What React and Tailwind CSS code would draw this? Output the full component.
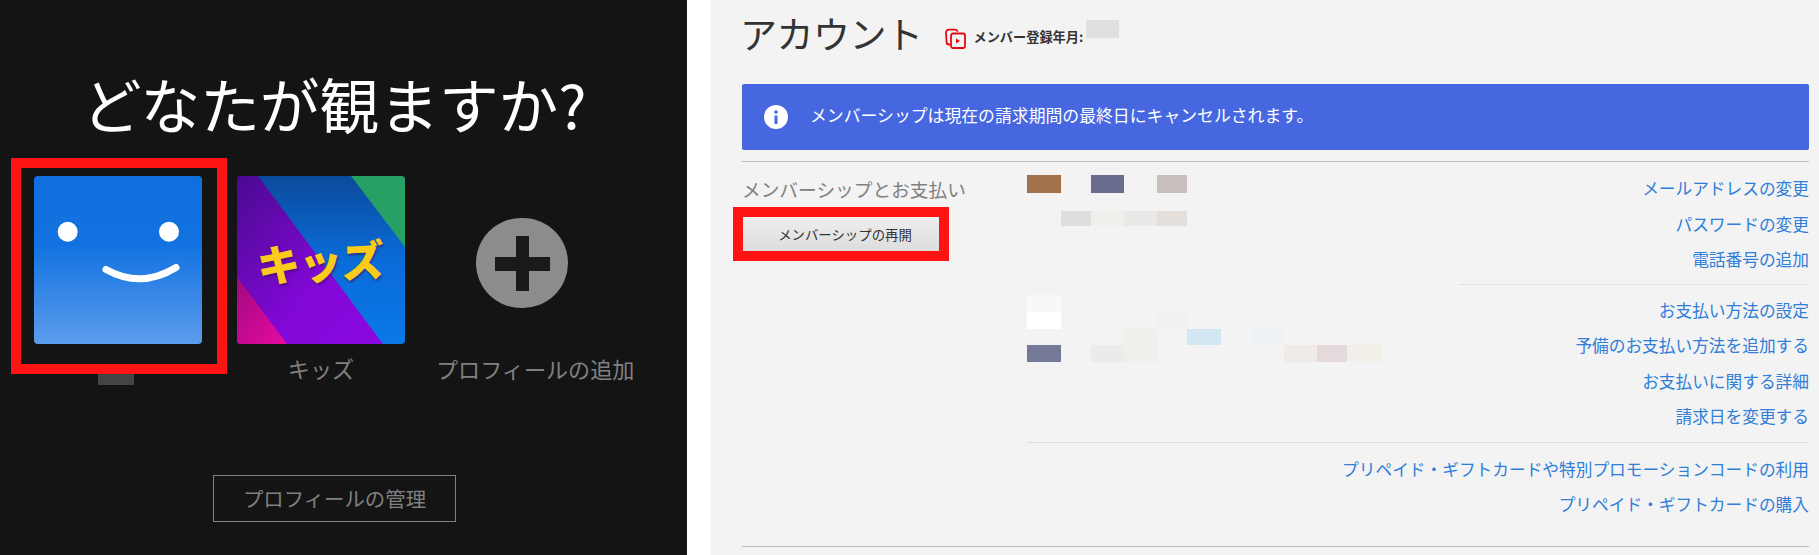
const jp = { fontFamily: '"Noto Sans CJK JP", sans-serif' };

const FLinks1 = ["メールアドレスの変更", "パスワードの変更", "電話番号の追加"];
const FLinks2 = ["お支払い方法の設定", "予備のお支払い方法を追加する", "お支払いに関する詳細", "請求日を変更する"];
const FLinks3 = ["プリペイド・ギフトカードや特別プロモーションコードの利用", "プリペイド・ギフトカードの購入"];

function LinkRow({ t }) {
  return <div className="h-[35.5px] leading-[35.5px] text-right text-[16.7px] text-[#2f7ed8] whitespace-nowrap">{t}</div>;
}

function Smile() {
  return (
    <svg width="168" height="168" viewBox="0 0 168 168" className="block rounded-[4px]">
      <defs>
        <linearGradient id="sm" x1="0" y1="0" x2="0" y2="1">
          <stop offset="0" stopColor="#0f70dd" />
          <stop offset="0.4" stopColor="#1172e0" />
          <stop offset="1" stopColor="#5c9cec" />
        </linearGradient>
      </defs>
      <rect width="168" height="168" fill="url(#sm)" />
      <circle cx="33.7" cy="55.7" r="10" fill="#fff" />
      <circle cx="135" cy="55.7" r="10" fill="#fff" />
      <path d="M72 93.5Q107 113 142 91.5" fill="none" stroke="#fff" strokeWidth="7" strokeLinecap="round" />
    </svg>
  );
}

function Kids() {
  return (
    <div className="relative w-[168px] h-[168px] rounded-[4px] overflow-hidden">
      <svg width="168" height="168" viewBox="0 0 168 168" className="block">
        <defs>
          <linearGradient id="kb" x1="0" y1="0" x2="0" y2="1">
            <stop offset="0" stopColor="#0a4a9c" />
            <stop offset="0.5" stopColor="#0a6cd8" />
            <stop offset="1" stopColor="#0a78e8" />
          </linearGradient>
          <linearGradient id="kp" x1="0" y1="0" x2="1" y2="1">
            <stop offset="0" stopColor="#4a0a90" />
            <stop offset="0.6" stopColor="#8208d8" />
            <stop offset="1" stopColor="#8a08e0" />
          </linearGradient>
          <linearGradient id="kk" x1="0" y1="0" x2="1" y2="1">
            <stop offset="0" stopColor="#a00a80" />
            <stop offset="1" stopColor="#e80aa0" />
          </linearGradient>
        </defs>
        <rect width="168" height="168" fill="url(#kb)" />
        <polygon points="114,0 168,0 168,71" fill="#26a065" />
        <polygon points="0,0 21,0 146,168 0,168" fill="url(#kp)" />
        <polygon points="0,101 50,168 0,168" fill="url(#kk)" />
      </svg>
      <span
        className="absolute left-[20px] top-[59px] text-[43px] leading-[50px] font-black text-[#fbcb1c] whitespace-nowrap -rotate-3 tracking-[-1px] [text-shadow:1px_2px_2px_rgba(60,20,80,0.6)]"
        style={jp}
      >
        キッズ
      </span>
    </div>
  );
}

function Block({ c }) {
  return <div className={c}></div>;
}

export default function App() {
  return (
    <div className="flex w-[1819px] h-[555px] bg-white overflow-hidden" style={jp}>
      {/* Left panel */}
      <div className="w-[687px] h-[555px] bg-[#141414] shrink-0">
        <div className="pt-[67px] h-[158px] pl-[82px]">
          <div className="h-[72px] leading-[72px] text-[59.7px] text-white whitespace-nowrap">どなたが観ますか?</div>
        </div>
        <div className="flex pl-[11px] h-[227px]">
          <div className="w-[216px]">
            <div className="w-[216px] h-[216px] border-[10px] border-[#ff1414] pl-[13px] pt-[8px]">
              <Smile />
            </div>
            <div className="ml-[87px] w-[36px] h-[11px] bg-[#444444]"></div>
          </div>
          <div className="ml-[10px] w-[168px] pt-[18px]">
            <Kids />
            <div className="mt-[9px] h-[30px] leading-[30px] text-center text-[22.2px] text-[#808080]">キッズ</div>
          </div>
          <div className="ml-[31px] w-[200px] pt-[60px]">
            <div className="ml-[40px] w-[92px] h-[90px] rounded-full bg-[#8c8c8c] flex items-center justify-center">
              <svg width="55" height="55" viewBox="0 0 55 55">
                <path d="M21 0h13v21h21v14H34v20H21V35H0V21h21z" fill="#1a1a1a" />
              </svg>
            </div>
            <div className="mt-[45px] h-[30px] leading-[30px] text-[22.1px] text-[#808080] whitespace-nowrap">プロフィールの追加</div>
          </div>
        </div>
        <div className="mt-[90px] ml-[213px] w-[243px] h-[47px] border border-[#808080] flex items-center justify-center text-[20.4px] text-[#808080]">
          プロフィールの管理
        </div>
      </div>

      {/* Right panel */}
      <div className="ml-[24px] flex-1 bg-[#f3f3f3] pl-[31px] pr-[10px]">
        <div className="h-[84px] flex items-start">
          <div className="-ml-[2px] mt-[8px] h-[50px] leading-[50px] text-[37px] text-[#333333] whitespace-nowrap tracking-[-0.5px]">アカウント</div>
          <svg width="21" height="21" viewBox="0 0 21 21" className="ml-[22px] mt-[28px]" fill="none" stroke="#e50914" strokeWidth="1.8">
            <path d="M5 16.5H4a2.5 2.5 0 0 1-2.4-2.4L1 5a3 3 0 0 1 3-3.4h6a3 3 0 0 1 2.8 2" />
            <rect x="6" y="5.5" width="14" height="14.5" rx="2" />
            <path d="M11 10.5l4 2.5-4 2.5z" fill="#e50914" stroke="none" />
          </svg>
          <div className="ml-[8px] mt-[26px] h-[22px] leading-[22px] text-[13.2px] font-bold text-[#333333] whitespace-nowrap">メンバー登録年月:</div>
          <div className="ml-[3px] mt-[20px] w-[33px] h-[18px] bg-[#e0e0e0]"></div>
        </div>

        <div className="h-[66px] rounded-[2px] bg-[#4667e0] flex items-center pl-[22px]">
          <svg width="24" height="24" viewBox="0 0 24 24">
            <circle cx="12" cy="12" r="12" fill="#fff" />
            <circle cx="12" cy="7" r="1.8" fill="#4667e0" />
            <rect x="10.5" y="10.5" width="3" height="8.5" fill="#4667e0" />
          </svg>
          <div className="ml-[22px] pb-[4px] text-[16.85px] text-white whitespace-nowrap">メンバーシップは現在の請求期間の最終日にキャンセルされます。</div>
        </div>

        <div className="mt-[11px] h-px bg-[#bbbbbb]"></div>

        <div className="flex">
          <div className="w-[285px] shrink-0">
            <div className="mt-[12px] h-[30px] leading-[30px] text-[18.7px] text-[#808080] whitespace-nowrap">メンバーシップとお支払い</div>
            <div className="mt-[3px] -ml-[9px] w-[216px] h-[54px] border-[10px] border-[#ff1414] bg-gradient-to-b from-[#eeeeee] to-[#dddddd] flex items-center justify-center pl-[8px] text-[13.4px] text-[#333333] whitespace-nowrap">
              メンバーシップの再開
            </div>
          </div>
          <div className="flex-1">
            <div className="flex">
              <div className="w-[432px] shrink-0 pt-[13px] grid grid-cols-[34px_30px_33px_33px_30px_34px_30px_33px_33px_30px_35px] grid-rows-[18px_18px_15px_69px_17px_17px_16px_17px]">
                <Block c="col-start-1 row-start-1 bg-[#a0714a]" />
                <Block c="col-start-3 row-start-1 bg-[#6a6c8f]" />
                <Block c="col-start-5 row-start-1 bg-[#c9bfbf]" />
                <Block c="col-start-2 row-start-3 bg-[#dfdedc]" />
                <Block c="col-start-3 row-start-3 bg-[#f0efec]" />
                <Block c="col-start-4 row-start-3 bg-[#ebe9e7]" />
                <Block c="col-start-5 row-start-3 bg-[#e4dfda]" />
                <Block c="col-start-1 row-start-5 bg-[#f8f8f8]" />
                <Block c="col-start-1 row-start-6 bg-white" />
                <Block c="col-start-5 row-start-6 bg-[#f0f0ef]" />
                <Block c="col-start-4 row-start-7 bg-[#f0efeb]" />
                <Block c="col-start-6 row-start-7 bg-[#d3e7f3]" />
                <Block c="col-start-8 row-start-7 bg-[#eff2f4]" />
                <Block c="col-start-1 row-start-8 bg-[#757a99]" />
                <Block c="col-start-3 row-start-8 bg-[#ebebeb]" />
                <Block c="col-start-4 row-start-8 bg-[#f0efec]" />
                <Block c="col-start-9 row-start-8 bg-[#efebe7]" />
                <Block c="col-start-10 row-start-8 bg-[#e4dadb]" />
                <Block c="col-start-11 row-start-8 bg-[#f2efe8]" />
              </div>
              <div className="flex-1 pt-[9px]">
                {FLinks1.map((t) => <LinkRow key={t} t={t} />)}
                <div className="mt-[6px] h-px bg-[#e2e2e2]"></div>
                <div className="mt-[8px]">
                  {FLinks2.map((t) => <LinkRow key={t} t={t} />)}
                </div>
              </div>
            </div>
            <div className="mt-[7px] h-px bg-[#dddddd]"></div>
            <div className="mt-[9px]">
              {FLinks3.map((t) => <LinkRow key={t} t={t} />)}
            </div>
          </div>
        </div>
        <div className="mt-[23px] h-px bg-[#bbbbbb]"></div>
      </div>
    </div>
  );
}
